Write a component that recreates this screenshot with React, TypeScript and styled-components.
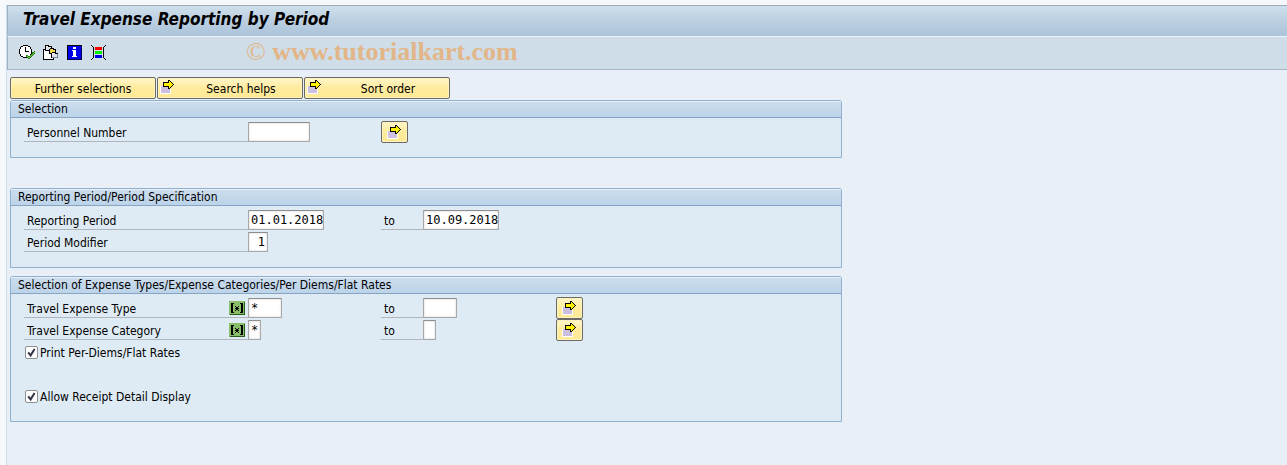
import React, { useState } from "react";
import styled, { createGlobalStyle } from "styled-components";

const GlobalStyle = createGlobalStyle`
  *, *::before, *::after { box-sizing: border-box; }
  body {
    margin: 0;
    background: #f5f9fc;
    color: #000;
    font: 12px/14px "DejaVu Sans Condensed", "Noto Sans", sans-serif;
  }
  button, input { font: inherit; color: inherit; margin: 0; }
`;

type Palette = Record<string, string>;

const palette: Palette = {
  k: "#000000",
  w: "#ffffff",
  g: "#5fc030",
  d: "#2d7a1a",
  y: "#ffef00",
  o: "#f2d650",
  c: "#dfe2ec",
  n: "#000050",
  b: "#0000e8",
  r: "#ff0000",
  l: "#00f000",
  p: "#cdbfe0",
  m: "#8abf6a",
  e: "#2b5a1c",
  a: "#8088a0",
};

const clockIcon = [
  "....kkkkk.......",
  "..kkwwwwwkk.....",
  ".kwwwwkwwwwk....",
  ".kwwwwkwwwwk....",
  "kwwwwwkwwwwwk...",
  "kwwwwwkwwwwwk...",
  "kwwwwwkkkkwwk..d",
  "kwwwwwwwwwwwkddg",
  "kwwwwwwwwwwwkdgd",
  ".kwwwwwwwwwkdgd.",
  ".kwwwwwddwwdgd..",
  "..kkwwwdgddgd...",
  "....kkkkdggd....",
  ".........dd.....",
  "................",
];

const variantIcon = [
  "..kkkk..........",
  "..kwwkkkk.......",
  "..kccccck.......",
  "..kcccckkkk.....",
  "kkkccckoookkk...",
  "kwkkkkkoooook...",
  "kwwwwwkoooook...",
  "kwwwwwkookkkk...",
  "kwwwwwkkkwwwkkk.",
  "kwwwwwwwkccccca.",
  "kwwwwwwwkccccca.",
  "kwwwwwwwkccccca.",
  "kwwwwwwwkaaaaaa.",
  "kwwwwwwwwwk.....",
  "kkkkkkkkkkk.....",
];

const infoIcon = [
  "kkkkkkkkkkkkkkk.",
  "kbbbbbbbbbbbbbn.",
  "kbbbbbwwwbbbbbn.",
  "kbbbbbwwwbbbbbn.",
  "kbbbbbbbbbbbbbn.",
  "kbbbbwwwwbbbbbn.",
  "kbbbbbwwwbbbbbn.",
  "kbbbbbwwwbbbbbn.",
  "kbbbbbwwwbbbbbn.",
  "kbbbbbwwwbbbbbn.",
  "kbbbbbwwwbbbbbn.",
  "kbbbbwwwwwbbbbn.",
  "kbbbbbbbbbbbbbn.",
  "kbbbbbbbbbbbbbn.",
  "knnnnnnnnnnnnnn.",
];

const selectionsIcon = [
  "k.............k.",
  ".k...........k..",
  "..k.rrrrrrr.k...",
  "..k.rrrrrrr.k...",
  "..k.rrrrrrr.k...",
  "..k.........k...",
  "..k.lllllll.k...",
  "..k.lllllll.k...",
  "..k.lllllll.k...",
  "..k.........k...",
  "..k.bbbbbbb.k...",
  "..k.bbbbbbb.k...",
  "..k.bbbbbbb.k...",
  ".k...........k..",
  "k.............k.",
];

const arrowIcon = [
  "........kk.....",
  "........kyk....",
  "...kkkkkkyyk...",
  "...kyyyyyyyyk..",
  "...kyyyyyyyyyk.",
  "...kyyyyyyyyk..",
  "wppkkkkkkyyk...",
  "wpppppppkyk....",
  "wpppppppkk.....",
  "wpppppppppw....",
  "wpppppppppw....",
  "wpppppppppw....",
  "wpppppppppw....",
  "wwwwwwwwwww....",
];

const patternIcon = [
  "mmmmmmmmmmmmmmmm",
  "mmmmmmmmmmmmmmme",
  "mmkkkmmmmmmkkkme",
  "mmkkmmmmmmmmkkme",
  "mmkkmmmmmmmmkkme",
  "mmkkmmkmmkmmkkme",
  "mmkkmmmkkmmmkkme",
  "mmkkmmkkkkmmkkme",
  "mmkkmmmkkmmmkkme",
  "mmkkmmkmmkmmkkme",
  "mmkkmmmmmmmmkkme",
  "mmkkkmmmmmmkkkme",
  "mmmmmmmmmmmmmmme",
  "meeeeeeeeeeeeeee",
];

function PixelIcon({ rows }: { rows: string[] }) {
  const cells: React.ReactNode[] = [];
  rows.forEach((row, y) => {
    let x = 0;
    while (x < row.length) {
      let end = x + 1;
      while (end < row.length && row[end] === row[x]) end++;
      if (row[x] !== ".")
        cells.push(<rect key={`${x}-${y}`} x={x} y={y} width={end - x} height={1} fill={palette[row[x]]} />);
      x = end;
    }
  });
  return (
    <svg width={rows[0].length} height={rows.length} shapeRendering="crispEdges" aria-hidden="true">
      {cells}
    </svg>
  );
}

const Page = styled.div`
  min-height: 100vh;
  padding: 5px 0 0 6px;
`;

const Shell = styled.main`
  min-height: calc(100vh - 5px);
  border-left: 1px solid #cfdae5;
  background: #e8eff6;
`;

const TitleBar = styled.header`
  height: 32px;
  padding: 4px 15px;
  border-top: 1px solid #9aabba;
  border-left: 1px solid #9db3c6;
  border-bottom: 1px solid #eef4f9;
  background: linear-gradient(#cfdfeb, #bdd0e2 45%, #abc3da);
`;

const Title = styled.h1`
  margin: 0;
  font-size: 17px;
  line-height: 18px;
  font-style: italic;
  font-weight: bold;
`;

const Toolbar = styled.div`
  display: flex;
  align-items: center;
  height: 33px;
  padding: 0 7px 2px;
  border-left: 1px solid #9db3c6;
  border-bottom: 1px solid #a5b7c6;
  background: #cfdde8;
`;

const ToolButton = styled.button`
  display: flex;
  align-items: center;
  justify-content: center;
  width: 24px;
  height: 23px;
  padding: 0;
  border: 0;
  background: none;
`;

const Watermark = styled.span`
  margin-left: 135px;
  color: #e2b688;
  font: bold 26px/28px "Liberation Serif", serif;
`;

const CopyrightSign = styled.span`
  font-weight: normal;
`;

const Content = styled.div`
  max-width: 838px;
  padding: 7px 3px;
`;

const ButtonRow = styled.div`
  display: flex;
  gap: 1px;
  margin-bottom: 1px;
`;

const PushButton = styled.button<{ $wide?: boolean }>`
  display: flex;
  align-items: center;
  justify-content: center;
  position: relative;
  width: ${(p) => (p.$wide ? "146px" : "27px")};
  height: 22px;
  padding: 0;
  border: 1px solid #6c6a68;
  border-radius: 2px;
  background: linear-gradient(#fff6cc, #ffeb9c 50%, #fee995);
  box-shadow: inset 0 0 0 1px #fff3bc;
`;

const CornerIcon = styled.span`
  position: absolute;
  left: 2px;
  top: 2px;
  line-height: 0;
`;

const ButtonText = styled.span<{ $shift?: boolean }>`
  padding: 2px 0 0 ${(p) => (p.$shift ? "22px" : "0")};
`;

const Group = styled.fieldset<{ $gap: number }>`
  min-width: 0;
  margin: 0 0 ${(p) => p.$gap}px;
  padding: 0;
  border: 1px solid #8fb0cf;
  border-radius: 3px 3px 0 0;
  background: #deebf4;
`;

const GroupTitle = styled.h2`
  height: 17px;
  margin: 0;
  padding: 0 7px;
  border-top: 1px solid #e6eff8;
  border-bottom: 1px solid #86a5c4;
  border-radius: 2px 2px 0 0;
  background: linear-gradient(#cbdced, #bcd3e9);
  font-size: 12px;
  line-height: 15px;
  font-weight: normal;
`;

const GroupBody = styled.div`
  padding: 3px 13px 14px;
`;

const Row = styled.div`
  display: grid;
  grid-template-columns: 224px 133px 42px 133px 27px;
  align-items: center;
  height: 22px;
`;

const FieldLabel = styled.label`
  display: flex;
  align-items: center;
  justify-content: space-between;
  height: 20px;
  padding: 3px 3px 0;
  border-bottom: 1px solid #b0b6bc;
`;

const PatternMark = styled.span`
  display: flex;
  padding-bottom: 2px;
`;

const TextField = styled.input<{ $width: number; $right?: boolean }>`
  width: ${(p) => p.$width}px;
  height: 20px;
  padding: 0 ${(p) => (p.$right ? "2px" : "0")} 0 2px;
  border: 1px solid #a8a8a8;
  border-top-color: #8f8f8f;
  border-radius: 1px;
  background: #fff;
  box-shadow: inset 0 0 2px #c4c4c4;
  font: 12px/16px "DejaVu Sans Mono", monospace;
  text-align: ${(p) => (p.$right ? "right" : "left")};
  outline: 0;
`;

const CheckRow = styled.label`
  display: flex;
  align-items: center;
  gap: 2px;
  height: 22px;
  padding-left: 1px;
`;

const CheckText = styled.span`
  padding-top: 2px;
`;

const CheckBox = styled.input`
  appearance: none;
  width: 13px;
  height: 13px;
  border: 1px solid #8f8f8f;
  border-radius: 2px;
  background: #fff;
  &:checked {
    background: #fff
      url("data:image/svg+xml,%3Csvg xmlns='http://www.w3.org/2000/svg' viewBox='0 0 11 11'%3E%3Cpath d='M2.2 5.4l2.4 3L8.6 2' fill='none' stroke='%23343448' stroke-width='2'/%3E%3C/svg%3E");
  }
`;

const Spacer = styled.div`
  height: 22px;
`;

function Arrow({ label }: { label: string }) {
  return (
    <PushButton type="button" aria-label={label}>
      <PixelIcon rows={arrowIcon} />
    </PushButton>
  );
}

type FieldProps = { id: string; width: number; value?: string; right?: boolean };

function Field({ id, width, value = "", right }: FieldProps) {
  const [text, setText] = useState(value);
  return <TextField id={id} $width={width} $right={right} value={text} onChange={(e) => setText(e.target.value)} />;
}

type RangeProps = {
  id: string;
  label: string;
  from: string;
  to: string;
  width: number;
  pattern?: boolean;
  more?: boolean;
};

function RangeRow({ id, label, from, to, width, pattern, more }: RangeProps) {
  return (
    <Row>
      <FieldLabel htmlFor={id}>
        {label}
        {pattern && <PatternMark><PixelIcon rows={patternIcon} /></PatternMark>}
      </FieldLabel>
      <Field id={id} width={width} value={from} />
      <FieldLabel htmlFor={`${id}-to`}>to</FieldLabel>
      <Field id={`${id}-to`} width={width} value={to} />
      {more && <Arrow label={`Multiple selection: ${label}`} />}
    </Row>
  );
}

export default function App() {
  return (
    <Page>
      <GlobalStyle />
      <Shell>
        <TitleBar>
          <Title>Travel Expense Reporting by Period</Title>
        </TitleBar>
        <Toolbar>
          <ToolButton type="button" aria-label="Execute"><PixelIcon rows={clockIcon} /></ToolButton>
          <ToolButton type="button" aria-label="Get variant"><PixelIcon rows={variantIcon} /></ToolButton>
          <ToolButton type="button" aria-label="Information"><PixelIcon rows={infoIcon} /></ToolButton>
          <ToolButton type="button" aria-label="Dynamic selections"><PixelIcon rows={selectionsIcon} /></ToolButton>
          <Watermark><CopyrightSign>©</CopyrightSign> www.tutorialkart.com</Watermark>
        </Toolbar>
        <Content>
          <ButtonRow>
            <PushButton type="button" $wide><ButtonText>Further selections</ButtonText></PushButton>
            <PushButton type="button" $wide>
              <CornerIcon><PixelIcon rows={arrowIcon} /></CornerIcon>
              <ButtonText $shift>Search helps</ButtonText>
            </PushButton>
            <PushButton type="button" $wide>
              <CornerIcon><PixelIcon rows={arrowIcon} /></CornerIcon>
              <ButtonText $shift>Sort order</ButtonText>
            </PushButton>
          </ButtonRow>
          <Group $gap={30} aria-label="Selection">
            <GroupTitle>Selection</GroupTitle>
            <GroupBody>
              <Row>
                <FieldLabel htmlFor="personnel">Personnel Number</FieldLabel>
                <Field id="personnel" width={62} />
                <Arrow label="Multiple selection: Personnel Number" />
              </Row>
            </GroupBody>
          </Group>
          <Group $gap={8} aria-label="Reporting Period">
            <GroupTitle>Reporting Period/Period Specification</GroupTitle>
            <GroupBody>
              <RangeRow id="period" label="Reporting Period" from="01.01.2018" to="10.09.2018" width={76} />
              <Row>
                <FieldLabel htmlFor="modifier">Period Modifier</FieldLabel>
                <Field id="modifier" width={20} value="1" right />
              </Row>
            </GroupBody>
          </Group>
          <Group $gap={0} aria-label="Expense Types">
            <GroupTitle>Selection of Expense Types/Expense Categories/Per Diems/Flat Rates</GroupTitle>
            <GroupBody>
              <RangeRow id="type" label="Travel Expense Type" from="*" to="" width={34} pattern more />
              <RangeRow id="category" label="Travel Expense Category" from="*" to="" width={13} pattern more />
              <CheckRow>
                <CheckBox type="checkbox" defaultChecked />
                <CheckText>Print Per-Diems/Flat Rates</CheckText>
              </CheckRow>
              <Spacer />
              <CheckRow>
                <CheckBox type="checkbox" defaultChecked />
                <CheckText>Allow Receipt Detail Display</CheckText>
              </CheckRow>
            </GroupBody>
          </Group>
        </Content>
      </Shell>
    </Page>
  );
}
